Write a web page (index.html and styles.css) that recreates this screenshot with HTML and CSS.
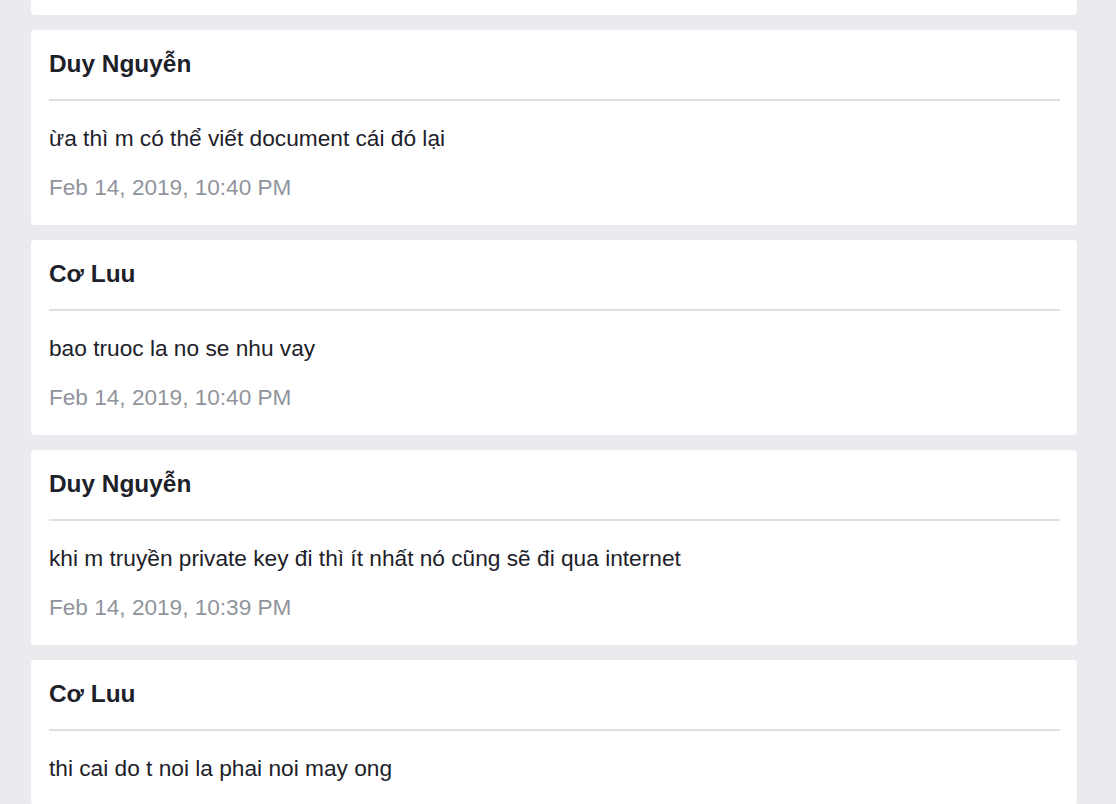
FILE: index.html
```html
<!DOCTYPE html>
<html lang="vi">
<head>
<meta charset="utf-8">
<title>Messages</title>
<link rel="stylesheet" href="styles.css">
</head>
<body>
<main class="feed">
  <div class="msg-tail" aria-hidden="true"></div>
  <article class="msg">
    <h2 class="msg-author">Duy Nguyễn</h2>
    <p class="msg-text">ừa thì m có thể viết document cái đó lại</p>
    <time class="msg-time">Feb 14, 2019, 10:40 PM</time>
  </article>
  <article class="msg">
    <h2 class="msg-author">Cơ Luu</h2>
    <p class="msg-text">bao truoc la no se nhu vay</p>
    <time class="msg-time">Feb 14, 2019, 10:40 PM</time>
  </article>
  <article class="msg">
    <h2 class="msg-author">Duy Nguyễn</h2>
    <p class="msg-text">khi m truyền private key đi thì ít nhất nó cũng sẽ đi qua internet</p>
    <time class="msg-time">Feb 14, 2019, 10:39 PM</time>
  </article>
  <article class="msg">
    <h2 class="msg-author">Cơ Luu</h2>
    <p class="msg-text">thi cai do t noi la phai noi may ong</p>
  </article>
</main>
</body>
</html>
```
FILE: styles.css
```css
html, body {
  margin: 0;
  padding: 0;
  background: #e9ebee;
  height: 100%;
  overflow: hidden;
}
body {
  font-family: "Liberation Sans", Arial, sans-serif;
  color: #1d2129;
}
.feed {
  display: flex;
  flex-direction: column;
  gap: 15px;
  padding: 0 39px 0 31px;
}
.msg-tail {
  height: 15px;
  background: #ffffff;
  border-radius: 0 0 4px 4px;
}
.msg {
  background: #ffffff;
  border-radius: 4px;
  padding: 20px 17px 24px 18px;
  display: flex;
  flex-direction: column;
}
.msg-author {
  margin: 0;
  font-size: 24.4px;
  line-height: 28px;
  font-weight: bold;
  padding-bottom: 21px;
  border-bottom: 2px solid #dddfe2;
}
.msg-text {
  margin: 24px 0 0;
  font-size: 22.7px;
  line-height: 26px;
}
.msg-time {
  display: block;
  margin-top: 24px;
  font-size: 22.6px;
  line-height: 26px;
  color: #90949c;
}
```
